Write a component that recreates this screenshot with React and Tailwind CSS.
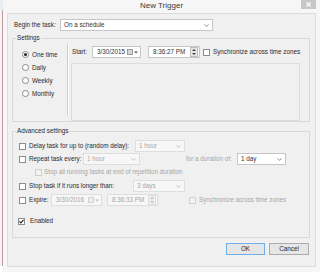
import React from 'react';

const Chevron = ({ color = '#707070' }) => (
  <svg width="5" height="3" viewBox="0 0 5 3" className="shrink-0">
    <path d="M0.5 0.4 L2.5 2.4 L4.5 0.4" fill="none" stroke={color} strokeWidth="0.8" />
  </svg>
);

const Box = ({ disabled, checked }) => (
  <span
    className={`w-[7px] h-[7px] shrink-0 border flex items-center justify-center ${
      disabled ? 'border-[#d0d0d0] bg-[#f3f3f3]' : 'border-[#8d8d8d] bg-white'
    }`}
  >
    {checked && (
      <svg width="5" height="5" viewBox="0 0 5 5">
        <path d="M0.4 2.4 L1.9 3.9 L4.6 0.9" fill="none" stroke="#222" strokeWidth="1.1" />
      </svg>
    )}
  </span>
);

const Radio = ({ on, label }) => (
  <div className="h-[13px] flex items-center">
    <span className="w-[7px] h-[7px] rounded-full border border-[#8a8a8a] bg-white flex items-center justify-center">
      {on && <span className="w-[3px] h-[3px] rounded-full bg-[#222]" />}
    </span>
    <span className="ml-[3px]">{label}</span>
  </div>
);

const Combo = ({ text, w, disabled }) => (
  <div
    className={`${w} h-[12px] shrink-0 flex items-center justify-between pl-[3px] pr-[3px] border ${
      disabled ? 'border-[#dedede] bg-[#f7f7f7] text-[#a6a6a6]' : 'border-[#c6c6c6] bg-white text-[#333]'
    }`}
  >
    <span>{text}</span>
    <Chevron color={disabled ? '#b5b5b5' : '#707070'} />
  </div>
);

const DateBox = ({ text, w, disabled }) => (
  <div
    className={`${w} h-[12px] shrink-0 flex items-center pl-[4px] pr-[2px] border ${
      disabled ? 'border-[#dedede] bg-[#f7f7f7] text-[#a6a6a6]' : 'border-[#c6c6c6] bg-white text-[#333]'
    }`}
  >
    <span className="flex-1">{text}</span>
    <span className={`w-[6px] h-[6px] border ${disabled ? 'border-[#d4d4d4] bg-[#ececec]' : 'border-[#9b9b9b] bg-[#d6d6d6]'}`} />
    <svg width="4" height="3" viewBox="0 0 4 3" className="ml-[1px]">
      <path d="M0 0.5 L4 0.5 L2 2.5 Z" fill={disabled ? '#c0c0c0' : '#555'} />
    </svg>
  </div>
);

const TimeBox = ({ text, w, disabled }) => (
  <div
    className={`${w} h-[12px] shrink-0 flex items-center pl-[4px] pr-px border ${
      disabled ? 'border-[#dedede] bg-[#f7f7f7] text-[#a6a6a6]' : 'border-[#c6c6c6] bg-white text-[#333]'
    }`}
  >
    <span className="flex-1">{text}</span>
    <span className={`w-[8px] h-[10px] border flex flex-col items-center justify-around ${disabled ? 'border-[#dcdcdc] bg-[#f0f0f0]' : 'border-[#bdbdbd] bg-[#e6e6e6]'}`}>
      <svg width="4" height="2" viewBox="0 0 4 2"><path d="M0 2 L4 2 L2 0 Z" fill={disabled ? '#bbb' : '#444'} /></svg>
      <svg width="4" height="2" viewBox="0 0 4 2"><path d="M0 0 L4 0 L2 2 Z" fill={disabled ? '#bbb' : '#444'} /></svg>
    </span>
  </div>
);

const Group = ({ title, children, className = '' }) => (
  <fieldset className={`mx-[4px] mr-[5px] border border-[#d9d9d9] ${className}`}>
    <legend className="ml-[3px] px-px leading-[8px]">{title}</legend>
    {children}
  </fieldset>
);

export default function App() {
  return (
    <div className="w-[320px] h-[272px] flex overflow-hidden bg-[#f6f6f6] font-['Liberation_Sans',Arial,sans-serif] text-[6.3px] leading-[8px] text-[#2a2a2a]">
      {/* background window edge */}
      <div className="w-[3px] flex flex-col bg-white">
        <div className="h-[10px] bg-[#e9eef3]" />
        <div className="flex-1 border-r border-[#c39a9f] bg-[#f4f4f4]" />
        <div className="h-[6px]" />
      </div>

      <div className="flex-1 flex flex-col">
        {/* title bar */}
        <div className="h-[13px] grid grid-cols-[1fr_auto_1fr] items-start">
          <div />
          <span className="text-[8px] leading-[12px] text-[#3a3a3a]">New Trigger</span>
          <div className="flex justify-end">
            <span className="w-[15px] h-[9px] mr-[4px] bg-[#c8c8c8] flex items-center justify-center">
              <svg width="5" height="5" viewBox="0 0 5 5">
                <path d="M0.5 0.5 L4.5 4.5 M4.5 0.5 L0.5 4.5" stroke="#fff" strokeWidth="1.2" />
              </svg>
            </span>
          </div>
        </div>

        <div className="h-[254px] ml-[4px] mr-[4px] border border-[#dcdcdc] bg-[#f0f0f0] flex flex-col">
          <div className="mt-[5px] pl-[6px] flex items-center">
            <span className="w-[46px]">Begin the task:</span>
            <Combo w="w-[153px]" text="On a schedule" />
          </div>

          <Group title="Settings" className="mt-[3px]">
            <div className="flex h-[79px] pb-[6px]">
              <div className="w-[54px] pl-[9px] pt-[6px]">
                <Radio on label="One time" />
                <Radio label="Daily" />
                <Radio label="Weekly" />
                <Radio label="Monthly" />
              </div>
              <div className="w-[2px] mt-px border-l border-r border-l-[#cdcdcd] border-r-white" />
              <div className="flex-1 pl-[2px]">
                <div className="mt-[4px] flex items-center">
                  <span className="ml-px w-[20px]">Start:</span>
                  <DateBox w="w-[49px]" text="3/30/2015" />
                  <TimeBox w="w-[52px] ml-[7px]" text="8:36:27 PM" />
                  <span className="ml-[3px]"><Box /></span>
                  <span className="ml-[3px]">Synchronize across time zones</span>
                </div>
                <div className="mt-[5px] w-[229px] h-[58px] border border-[#dcdcdc]" />
              </div>
            </div>
          </Group>

          <Group title="Advanced settings" className="mt-[5px]">
            <div className="pb-[10px]">
              <div className="mt-[5px] h-[12px] flex items-center pl-[6px]">
                <Box />
                <span className="ml-[3px] w-[106px]">Delay task for up to (random delay):</span>
                <Combo w="w-[50px]" text="1 hour" disabled />
              </div>
              <div className="mt-px h-[12px] flex items-center pl-[6px]">
                <Box />
                <span className="ml-[3px] w-[54px]">Repeat task every:</span>
                <Combo w="w-[57px]" text="1 hour" disabled />
                <span className="ml-[46px] w-[51px] text-[#a6a6a6]">for a duration of:</span>
                <Combo w="w-[49px]" text="1 day" />
              </div>
              <div className="mt-px h-[12px] flex items-center pl-[22px] text-[#a6a6a6]">
                <Box disabled />
                <span className="ml-[2px]">Stop all running tasks at end of repetition duration</span>
              </div>
              <div className="mt-[2px] h-[12px] flex items-center pl-[6px]">
                <Box />
                <span className="ml-[3px] w-[104px]">Stop task if it runs longer than:</span>
                <Combo w="w-[52px]" text="3 days" disabled />
              </div>
              <div className="mt-[2px] h-[12px] flex items-center pl-[6px]">
                <Box />
                <span className="ml-[3px] w-[22px]">Expire:</span>
                <DateBox w="w-[51px]" text="3/30/2016" disabled />
                <TimeBox w="w-[51px] ml-[5px]" text="8:36:33 PM" disabled />
                <span className="ml-[31px]"><Box disabled /></span>
                <span className="ml-[3px] text-[#a6a6a6]">Synchronize across time zones</span>
              </div>
              <div className="mt-[9px] h-[12px] flex items-center pl-[5px]">
                <Box checked />
                <span className="ml-[5px]">Enabled</span>
              </div>
            </div>
          </Group>

          <div className="mt-[5px] pr-[6px] flex justify-end gap-[4px]">
            <button className="w-[39px] h-[12px] border border-[#6fb0ec] bg-[#e6e6e6] leading-[10px] text-[#2a2a2a]">OK</button>
            <button className="w-[40px] h-[12px] border border-[#acacac] bg-[#e6e6e6] leading-[10px] text-[#2a2a2a]">Cancel</button>
          </div>
        </div>
      </div>
    </div>
  );
}
